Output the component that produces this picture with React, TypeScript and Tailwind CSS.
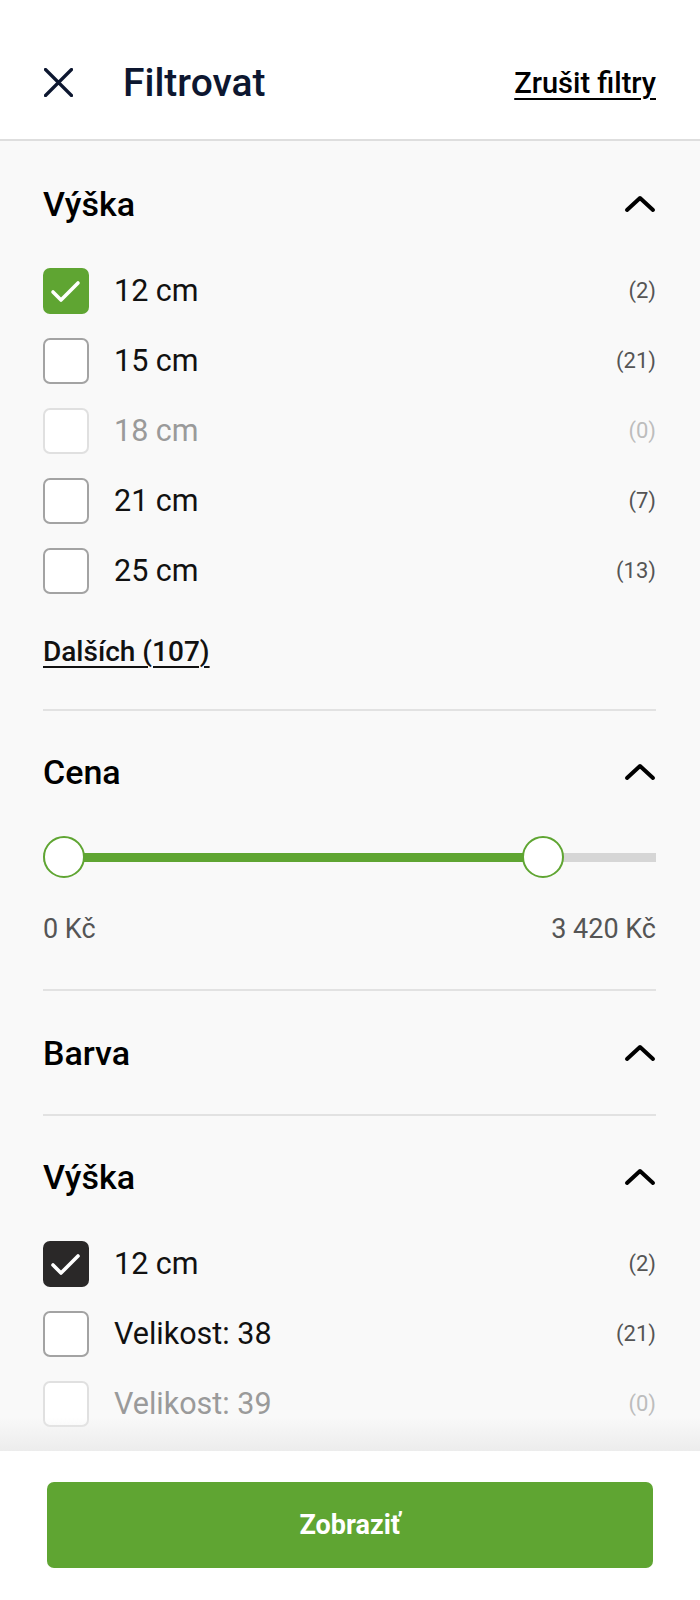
import React from "react";

const font = { fontFamily: "Roboto, 'Noto Sans', Arial, sans-serif" };

function Chevron() {
  return (
    <svg width="32" height="20" viewBox="0 0 32 20" className="shrink-0">
      <path d="M3 16 L16 4 L29 16" fill="none" stroke="#000" strokeWidth="4" strokeLinecap="round" strokeLinejoin="round" />
    </svg>
  );
}

function Check() {
  return (
    <svg width="46" height="46" viewBox="0 0 46 46">
      <path d="M10 24 L18 32 L35 15" fill="none" stroke="#fff" strokeWidth="3.6" strokeLinecap="round" strokeLinejoin="round" />
    </svg>
  );
}

type Item = { label: string; count: number; checked?: boolean; disabled?: boolean; hidden?: boolean };

function Row({ item, dark }: { item: Item; dark?: boolean }) {
  return (
    <div className="flex h-[70px] items-center">
      {item.checked ? (
        <div className={`h-[46px] w-[46px] shrink-0 rounded-[7px] ${dark ? "bg-[#2a2828]" : "bg-[#5fa532]"}`}>
          <Check />
        </div>
      ) : (
        <div
          className={`h-[46px] w-[46px] shrink-0 rounded-[7px] border-2 bg-white ${
            item.disabled ? "border-[#e0e0e0]" : "border-[#a3a3a3]"
          }`}
        />
      )}
      {!item.hidden && (
        <>
          <span className={`ml-[25px] text-[30.5px] leading-[36px] ${item.disabled ? "text-[#9a9a9a]" : "text-[#111]"}`}>
            {item.label}
          </span>
          <span className={`ml-auto text-[22px] leading-[28px] ${item.disabled ? "text-[#bdbdbd]" : "text-[#555]"}`}>
            ({item.count})
          </span>
        </>
      )}
    </div>
  );
}

function Heading({ title }: { title: string }) {
  return (
    <div className="flex h-[40px] items-center justify-between">
      <span className="text-[34px] font-medium leading-[40px] text-[#000]">{title}</span>
      <Chevron />
    </div>
  );
}

export default function App() {
  const first: Item[] = [
    { label: "12 cm", count: 2, checked: true },
    { label: "15 cm", count: 21 },
    { label: "18 cm", count: 0, disabled: true },
    { label: "21 cm", count: 7 },
    { label: "25 cm", count: 13 },
  ];
  const second: Item[] = [
    { label: "12 cm", count: 2, checked: true },
    { label: "Velikost: 38", count: 21 },
    { label: "Velikost: 39", count: 0, disabled: true },
    { label: "Velikost: 40", count: 5, hidden: true },
  ];
  return (
    <div className="flex h-[1600px] w-[700px] flex-col overflow-hidden bg-[#f9f9f9]" style={font}>
      <header className="flex h-[141px] shrink-0 items-center border-b-2 border-[#dedede] bg-white pl-[44px] pr-[44px] pt-[26px]">
        <svg width="29" height="29" viewBox="0 0 29 29" className="shrink-0">
          <path d="M1.5 1.5 L27.5 27.5 M27.5 1.5 L1.5 27.5" stroke="#0d1730" strokeWidth="3.2" strokeLinecap="round" />
        </svg>
        <h1 className="ml-[50px] text-[39px] font-medium leading-[46px] text-[#0d1730]">Filtrovat</h1>
        <a className="ml-auto text-[29px] font-medium leading-[34px] text-[#000] underline underline-offset-[5px] decoration-[2px]">
          Zrušit filtry
        </a>
      </header>

      <div className="relative flex-1 overflow-hidden">
        <div className="pl-[43px] pr-[44px]">
          <section className="border-b-2 border-[#e2e2e2] pb-[41px] pt-[43px]">
            <Heading title="Výška" />
            <div className="mt-[32px] flex flex-col">
              {first.map((it) => (
                <Row key={it.label} item={it} />
              ))}
            </div>
            <a className="mt-[30px] block text-[28px] font-medium leading-[32px] text-[#111] underline underline-offset-[5px] decoration-[2px]">
              Dalších (107)
            </a>
          </section>

          <section className="border-b-2 border-[#e2e2e2] pb-[44px] pt-[41px]">
            <Heading title="Cena" />
            <div className="relative mt-[44px] h-[42px]">
              <div className="absolute left-0 right-0 top-[17px] h-[9px] bg-[#d6d6d6]" />
              <div className="absolute left-[21px] top-[17px] h-[9px] w-[479px] bg-[#5fa532]" />
              <div className="absolute left-0 top-0 h-[42px] w-[42px] rounded-full border-2 border-[#5fa532] bg-white" />
              <div className="absolute left-[479px] top-0 h-[42px] w-[42px] rounded-full border-2 border-[#5fa532] bg-white" />
            </div>
            <div className="mt-[35px] flex justify-between text-[27px] leading-[32px] text-[#555]">
              <span>0 Kč</span>
              <span>3 420 Kč</span>
            </div>
          </section>

          <section className="border-b-2 border-[#e2e2e2] pb-[41px] pt-[42px]">
            <Heading title="Barva" />
          </section>

          <section className="pt-[41px]">
            <Heading title="Výška" />
            <div className="mt-[32px] flex flex-col">
              {second.map((it) => (
                <Row key={it.label} item={it} dark />
              ))}
            </div>
          </section>
        </div>
        <div className="pointer-events-none absolute bottom-0 left-0 right-0 h-[34px] bg-gradient-to-b from-transparent to-[#ececec]" />
      </div>

      <footer className="flex h-[149px] shrink-0 items-start bg-white px-[47px] pt-[31px]">
        <button className="flex h-[86px] w-full items-center justify-center rounded-[7px] bg-[#5fa532] text-[27px] font-bold text-white">
          Zobraziť
        </button>
      </footer>
    </div>
  );
}
